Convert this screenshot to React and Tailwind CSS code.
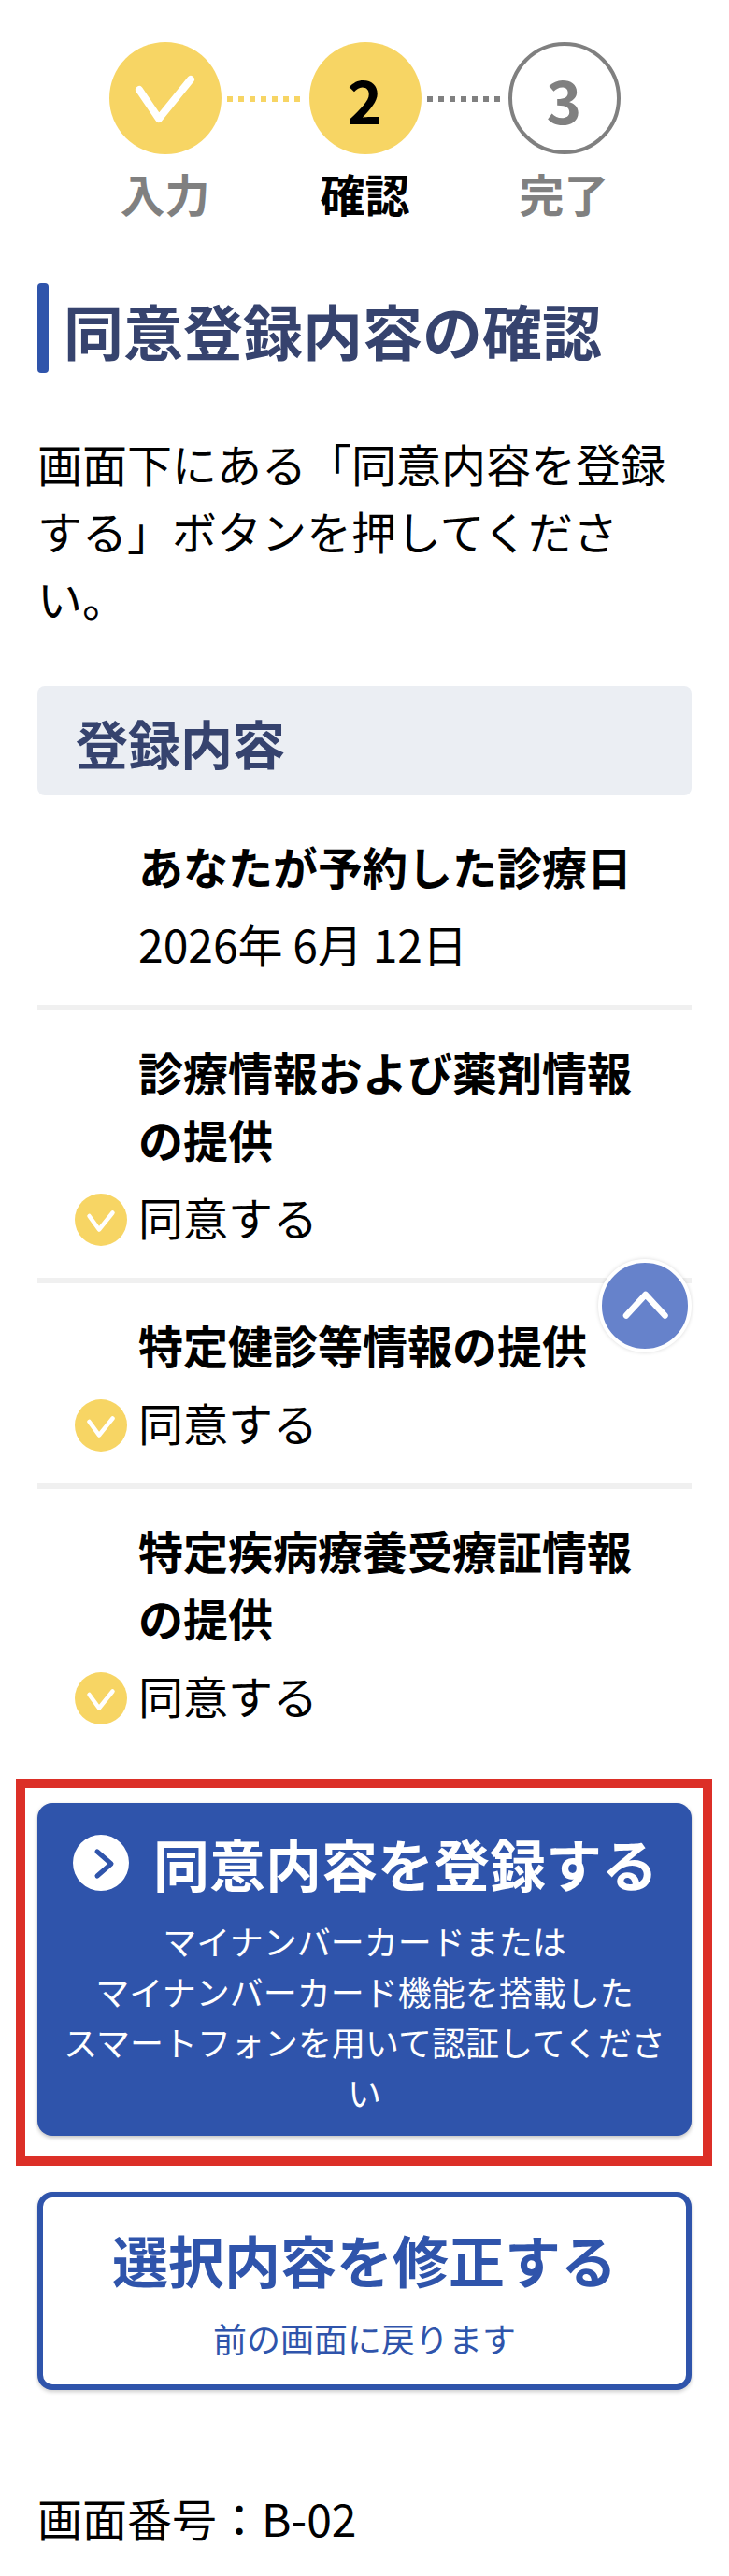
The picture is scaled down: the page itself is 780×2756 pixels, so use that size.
import React from "react";

const Dots = ({ cls, w }) => (
  <div className={`flex gap-[6px] pl-[6px] mt-[58px] ${w}`}>
    {[0, 1, 2, 3, 4, 5, 6].map((i) => (
      <span key={i} className={`block w-[6px] h-[6px] ${cls}`} />
    ))}
  </div>
);

const Step = ({ label, labelCls, children }) => (
  <div className="flex flex-col items-center w-[120px]">
    {children}
    <div className={`mt-[5px] whitespace-nowrap text-[48px] leading-[72px] font-bold ${labelCls}`}>{label}</div>
  </div>
);

const Agree = () => (
  <div className="flex items-center gap-[12px] mt-[11px] -ml-[68px] h-[72px]">
    <svg width="56" height="56" viewBox="0 0 56 56" className="shrink-0 mt-[8px]">
      <circle cx="28" cy="28" r="28" fill="#f7d564" />
      <path d="M15.5 24 L26 38.5 L40.5 20.5" fill="none" stroke="#fff" strokeWidth="4.5" strokeLinecap="round" strokeLinejoin="round" />
    </svg>
    <span className="text-[48px] leading-[72px]">同意する</span>
  </div>
);

const Item = ({ title, first, last, children }) => (
  <div className={`pl-[108px] pr-[32px] pb-[30px] ${first ? "pt-[39px]" : "pt-[29px]"} ${last ? "" : "border-b-[6px] border-[#f0f0f0]"}`}>
    <div className="text-[48px] leading-[72px] font-bold">{title}</div>
    {children}
  </div>
);

export default function App() {
  return (
    <div className="relative w-[780px] h-[2756px] overflow-hidden bg-white text-black px-[40px] pt-[45px] font-['Noto_Sans_CJK_JP','Noto_Sans',sans-serif]">
      <div className="flex justify-center">
        <Step label="入力" labelCls="text-[#808080]">
          <svg width="120" height="120" viewBox="0 0 120 120">
            <circle cx="60" cy="60" r="60" fill="#f7d564" />
            <path d="M32 51 L53 82 L87 40" fill="none" stroke="#fff" strokeWidth="8" strokeLinecap="round" strokeLinejoin="round" />
          </svg>
        </Step>
        <Dots cls="bg-[#f7d564]" w="w-[94px]" />
        <Step label="確認" labelCls="text-black">
          <div className="flex items-center justify-center w-[120px] h-[120px] rounded-full bg-[#f7d564] text-[64px] font-bold">2</div>
        </Step>
        <Dots cls="bg-[#808080]" w="w-[93px]" />
        <Step label="完了" labelCls="text-[#808080]">
          <div className="flex items-center justify-center w-[120px] h-[120px] rounded-full border-[4px] border-[#808080] bg-white text-[64px] font-bold text-[#808080]">3</div>
        </Step>
      </div>

      <div className="flex items-center gap-[16px] mt-[61px] h-[96px]">
        <div className="w-[12px] h-full rounded-[4px] bg-[#2f54ab]" />
        <h1 className="pt-[2px] text-[64px] leading-[96px] font-bold text-[#36436e] whitespace-nowrap">同意登録内容の確認</h1>
      </div>

      <p className="mt-[60px] text-[48px] leading-[72px]">画面下にある「同意内容を登録する」ボタンを押してください。</p>

      <div className="mt-[59px] h-[117px] flex items-center pl-[41px] pt-[2px] rounded-[8px] bg-[#ebeef3] text-[56px] font-bold text-[#36436e]">登録内容</div>

      <Item title="あなたが予約した診療日" first>
        <div className="mt-[11px] text-[48px] leading-[72px]">2026年 6月 12日</div>
      </Item>
      <Item title="診療情報および薬剤情報の提供"><Agree /></Item>
      <Item title="特定健診等情報の提供"><Agree /></Item>
      <Item title="特定疾病療養受療証情報の提供" last><Agree /></Item>

      <div className="-ml-[23px] -mr-[22px] mt-[24px] border-[10px] border-[#dc2f27] pl-[13px] pr-[12px] pt-[16px] pb-[22px]">
        <button className="block w-full rounded-[16px] bg-[#2f54ab] px-[16px] pt-[19px] pb-[20px] text-white text-center shadow-[0_2px_4px_rgba(0,0,0,0.25)]">
          <span className="flex items-center justify-center gap-[26px] pl-[2px] text-[60px] leading-[90px] font-bold">
            <svg width="60" height="60" viewBox="0 0 60 60" className="shrink-0">
              <circle cx="30" cy="30" r="30" fill="#fff" />
              <path d="M26 18 L41 31 L26 44" fill="none" stroke="#2f54ab" strokeWidth="5" strokeLinecap="round" strokeLinejoin="round" />
            </svg>
            同意内容を登録する
          </span>
          <span className="block mt-[11px] text-[36px] leading-[54px]">
            マイナンバーカードまたは<br />マイナンバーカード機能を搭載した<br />スマートフォンを用いて認証してください
          </span>
        </button>
      </div>

      <button className="block w-full mt-[28px] rounded-[16px] border-[6px] border-[#2f54ab] bg-white pt-[21px] pb-[23px] text-center text-[#2f54ab] shadow-[0_2px_4px_rgba(0,0,0,0.2)]">
        <span className="block text-[60px] leading-[90px] font-bold">選択内容を修正する</span>
        <span className="block mt-[12px] text-[36px] leading-[54px]">前の画面に戻ります</span>
      </button>

      <p className="mt-[100px] text-[48px] leading-[72px]">画面番号：B-02</p>

      <div className="absolute left-[640px] top-[1347px] w-[100px] h-[100px] rounded-full border-[4px] border-white bg-[#6682cb] shadow-[0_0_4px_rgba(0,0,0,0.15)]">
        <svg width="92" height="92" viewBox="0 0 92 92">
          <path d="M26 56.5 L46.7 34 L67.5 56.5" fill="none" stroke="#fff" strokeWidth="6.5" strokeLinecap="round" strokeLinejoin="round" />
        </svg>
      </div>
    </div>
  );
}
